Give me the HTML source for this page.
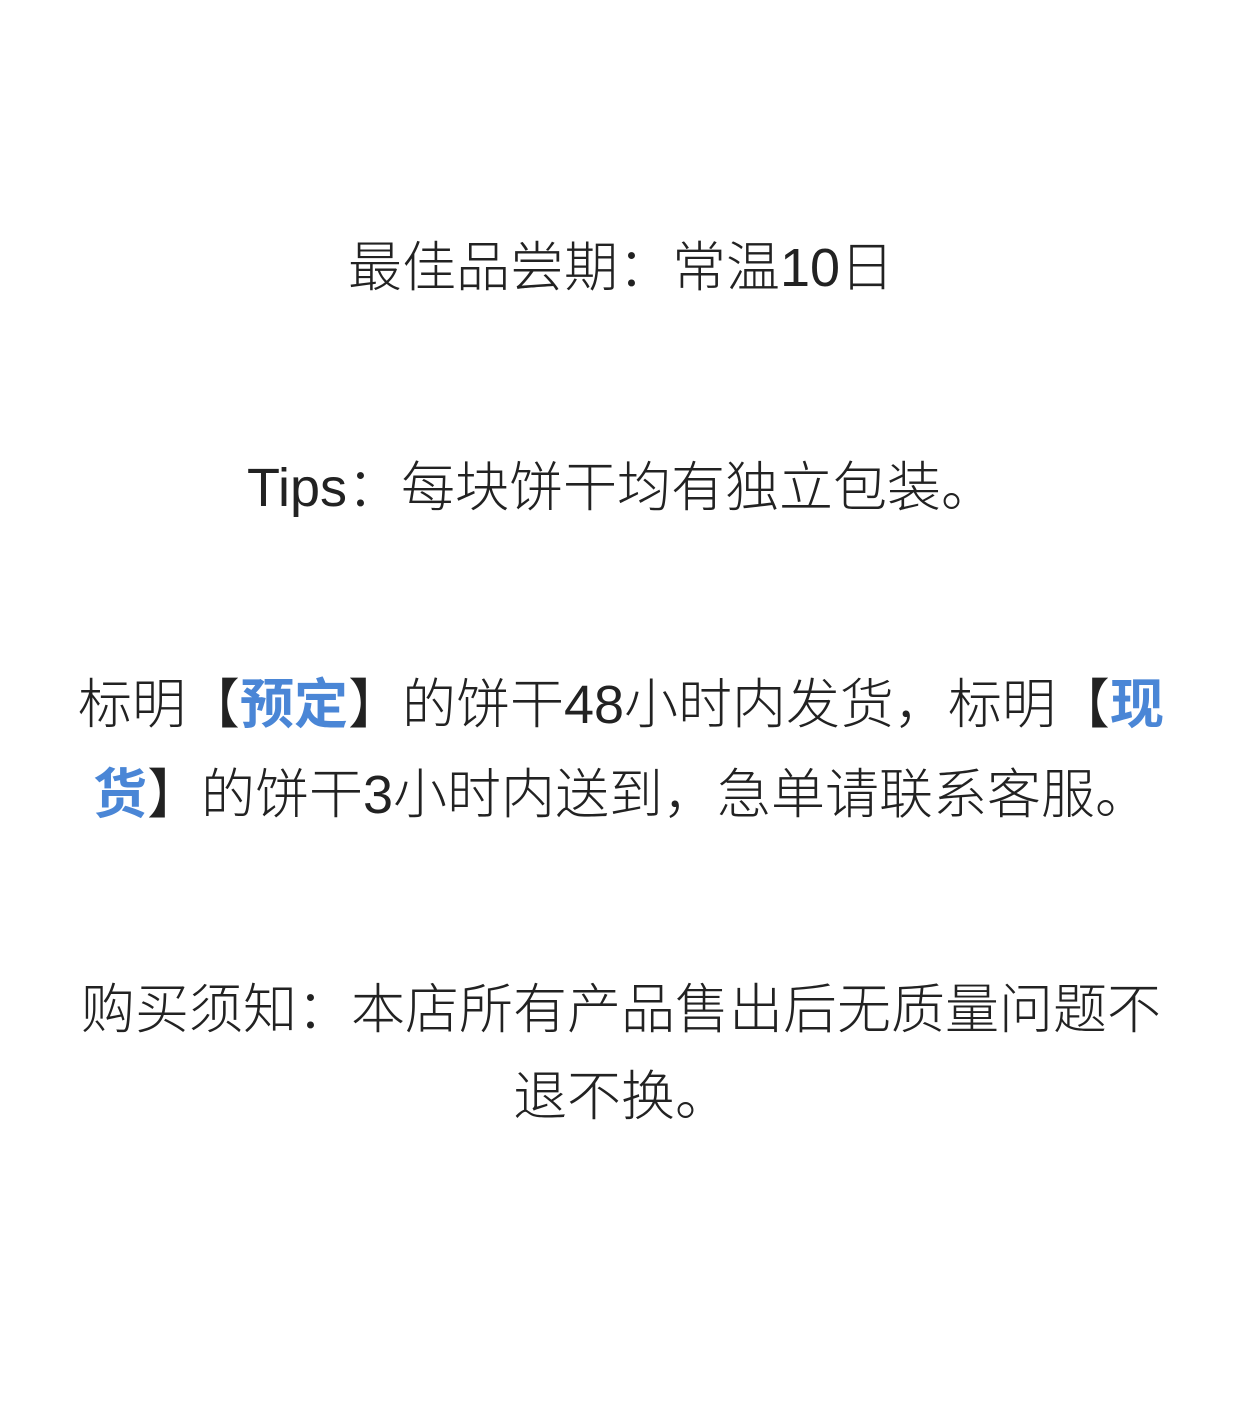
<!DOCTYPE html>
<html><head><meta charset="utf-8"><style>
html,body{margin:0;padding:0;background:#fff;}
body{width:1242px;height:1411px;position:relative;overflow:hidden;font-family:"Liberation Sans","Noto Sans CJK SC",sans-serif;color:#222;font-size:54px;font-weight:300;}
.l{position:absolute;left:0;width:1242px;text-align:center;white-space:nowrap;line-height:54px;height:54px;}
b{color:#4a86d6;font-weight:700;}
</style></head><body>
<div class="l" style="top:241px">最佳品尝期：常温10日</div>
<div class="l" style="top:461px">Tips：每块饼干均有独立包装。</div>
<div class="l" style="top:678px">标明【<b>预定</b>】的饼干48小时内发货，标明【<b>现</b></div>
<div class="l" style="top:768px"><b>货</b>】的饼干3小时内送到，急单请联系客服。</div>
<div class="l" style="top:983px">购买须知：本店所有产品售出后无质量问题不</div>
<div class="l" style="top:1070px">退不换。</div>
</body></html>
